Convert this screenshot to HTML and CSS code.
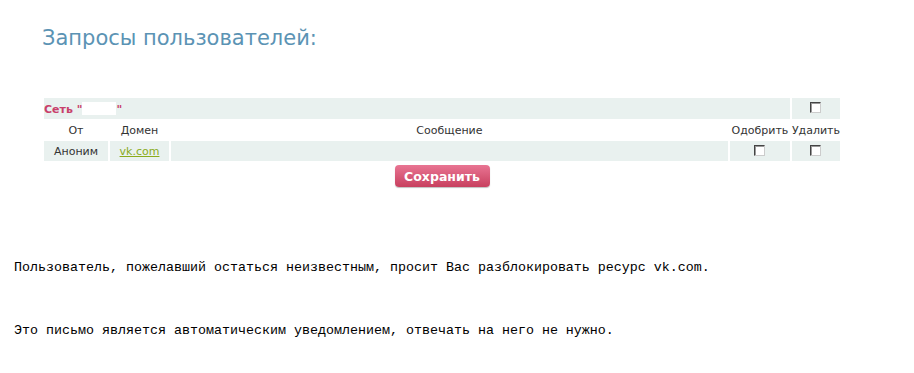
FILE: index.html
```html
<!DOCTYPE html>
<html>
<head>
<meta charset="utf-8">
<link rel="stylesheet" href="styles.css">
</head>
<body>
<div class="panel">
  <h1 class="title">Запросы пользователей:</h1>
  <table class="req">
    <tr class="net">
      <td colspan="4" class="netname">Сеть "<span class="mask"></span>"</td>
      <td class="chk"><span class="cb"></span></td>
    </tr>
    <tr class="head">
      <td class="c-from">От</td>
      <td class="c-dom">Домен</td>
      <td class="c-msg">Сообщение</td>
      <td class="c-ok">Одобрить</td>
      <td class="c-del">Удалить</td>
    </tr>
    <tr class="data">
      <td class="c-from">Аноним</td>
      <td class="c-dom"><a href="#" class="link">vk.com</a></td>
      <td class="c-msg"></td>
      <td class="chk"><span class="cb"></span></td>
      <td class="chk"><span class="cb"></span></td>
    </tr>
  </table>
  <div class="actions"><button class="save">Сохранить</button></div>
</div>
<pre class="mail">Пользователь, пожелавший остаться неизвестным, просит Вас разблокировать ресурс vk.com.</pre>
<pre class="mail second">Это письмо является автоматическим уведомлением, отвечать на него не нужно.</pre>
</body>
</html>
```
FILE: styles.css
```css
html, body { margin: 0; padding: 0; background: #fff; }
body { font-family: "DejaVu Sans", Verdana, sans-serif; }
.panel { padding-left: 42px; width: 800px; }
.title {
  margin: 0;
  padding: 23px 0 0 0;
  font-weight: normal;
  font-size: 21px;
  line-height: 30px;
  color: #5b93b4;
}
.req {
  margin-top: 43px;
  width: 800px;
  border-collapse: separate;
  border-spacing: 2px;
  font-size: 11px;
  color: #333;
}
.req td { padding: 0; }
.net td { background: #e9f1ef; height: 21px; }
.netname { color: #c8406a; font-weight: bold; font-size: 11px; }
.mask { display: inline-block; width: 34px; height: 13px; background: #fff; vertical-align: -2px; }
.head td { height: 18px; text-align: center; }
.data td { background: #e9f1ef; height: 20px; text-align: center; }
.c-from { width: 64px; }
.c-dom { width: 59px; }
.c-ok { width: 60px; }
.c-del { width: 48px; }
.chk { text-align: center; }
.cb {
  display: inline-block;
  width: 9px; height: 9px;
  background: #fff;
  border-top: 1px solid #444;
  border-left: 1px solid #444;
  border-right: 1px solid #ccc;
  border-bottom: 1px solid #ccc;
  box-shadow: inset 1px 1px 0 #999;
  vertical-align: -1px;
}
.link { color: #8aab1c; text-decoration: underline; }
.actions { display: flex; justify-content: center; padding-top: 2px; }
.save {
  width: 95px; height: 22px;
  border: 0;
  border-radius: 4px;
  background: linear-gradient(#e97593, #c8405f);
  color: #fff;
  font-family: "DejaVu Sans", Verdana, sans-serif;
  font-weight: bold;
  font-size: 12.5px;
  padding: 0;
  box-shadow: 0 1px 1px rgba(0,0,0,0.25);
}
.mail {
  margin: 0;
  padding-left: 14px;
  font-family: "Liberation Mono", "Courier New", monospace;
  font-size: 13.33px;
  line-height: 16px;
  color: #000;
  margin-top: 73px;
}
.mail.second { margin-top: 47px; }
```
